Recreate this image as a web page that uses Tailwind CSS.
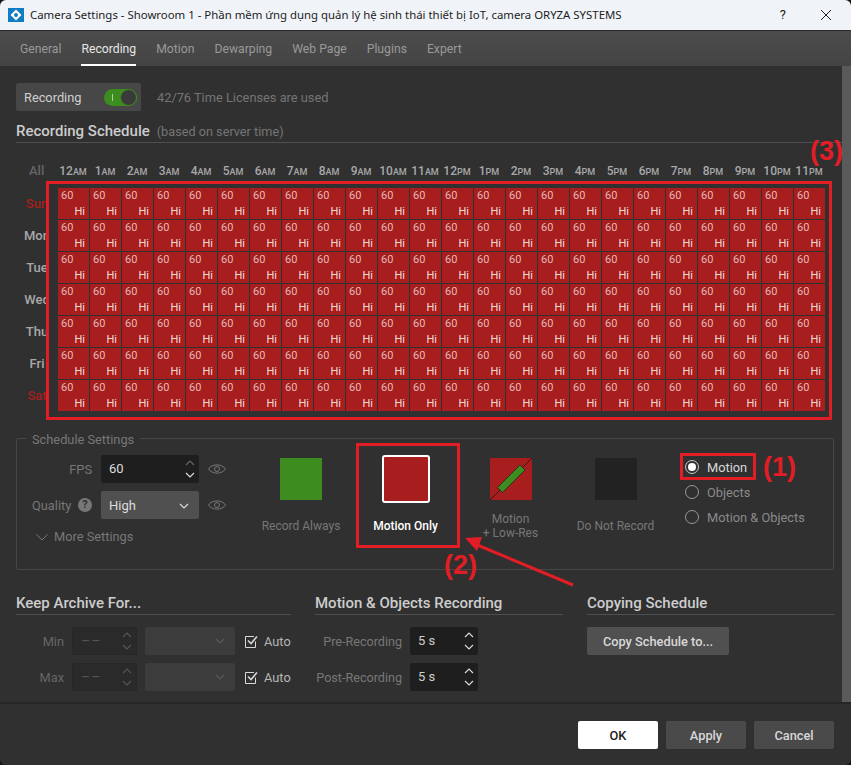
<!DOCTYPE html>
<html lang="en">
<head>
    <meta charset="UTF-8">
    <title>Camera Settings</title>
    <script src="https://cdn.jsdelivr.net/npm/@tailwindcss/browser@4"></script>
</head>
<body class="bg-[#141414]">
<div class="relative w-[851px] h-[765px] overflow-hidden rounded-[6px] bg-[#303030] font-['Roboto',sans-serif] text-[12px] text-[#8a8a8a]">

    <!-- Title bar -->
    <div class="h-[31px] flex items-center bg-[#f0f4f9] border-b border-[#2a2a2a] text-[#1c1c1c]">
        <svg class="ml-[8px] w-[16px] h-[14px]" viewBox="0 0 16 14">
            <rect width="16" height="14" fill="#0f7cc4"/>
            <path d="M8 1.5 L13.5 7 L8 12.5 L2.5 7 Z" fill="#fff"/>
            <circle cx="8" cy="7" r="2" fill="#0f7cc4"/>
        </svg>
        <span class="ml-[6px] font-['Noto_Sans',sans-serif] text-[11.4px]">Camera Settings - Showroom 1 - Phần mềm ứng dụng quản lý hệ sinh thái thiết bị IoT, camera ORYZA SYSTEMS</span>
        <span class="ml-auto mr-[35px] text-[13px]">?</span>
        <svg class="mr-[20px] w-[10px] h-[10px]" viewBox="0 0 10 10" fill="none" stroke="#222" stroke-width="1"><path d="M0 0 L10 10 M10 0 L0 10"/></svg>
    </div>

    <!-- Tabs -->
    <div class="h-[35px] flex gap-[20px] pl-[20px] bg-gradient-to-b from-[#4c4c4c] to-[#444444] text-[12.2px] text-[#999999]">
        <div class="flex items-center pt-[1px]">General</div>
        <div class="flex items-center text-[#e6e6e6] border-b-2 border-white pt-[3px]">Recording</div>
        <div class="flex items-center pt-[1px]">Motion</div>
        <div class="flex items-center pt-[1px]">Dewarping</div>
        <div class="flex items-center pt-[1px]">Web Page</div>
        <div class="flex items-center pt-[1px]">Plugins</div>
        <div class="flex items-center pt-[1px]">Expert</div>
    </div>

    <!-- Main -->
    <div class="h-[636px] flex">
        <div class="w-[842px] pl-[16px] pr-[8px] pt-[17px]">

            <div class="flex items-center h-[28px]">
                <div class="w-[125px] h-[28px] rounded-[2px] bg-[#474747] flex items-center pl-[8px] text-[#cfcfcf] text-[12.8px]">
                    <span class="pt-[2px]">Recording</span>
                    <div class="ml-auto mr-[4px] relative w-[33px] h-[17px] rounded-full bg-[#3d8c1f]">
                        <div class="absolute left-[8px] top-[5px] w-[1px] h-[7px] bg-[#a5d68f]"></div>
                        <div class="absolute right-0 top-0 w-[17px] h-[17px] rounded-full bg-[#3a3a3a] border border-[#3d8c1f]"></div>
                    </div>
                </div>
                <span class="ml-[16px] pt-[2px] text-[12.8px] text-[#757575]">42/76 Time Licenses are used</span>
            </div>

            <div class="h-[32px] -mr-[8px] flex items-end pb-[2px] border-b border-[#4f4f4f]">
                <span class="text-[15px] leading-[17px] font-medium text-[#cccccc]">Recording Schedule</span>
                <span class="ml-[7px] text-[12.7px] leading-[17px] text-[#757575]">(based on server time)</span>
            </div>

            <!-- Schedule grid -->
            <div class="mt-[18px] flex h-[20px] items-center">
                <div class="w-[42px] pl-[13px] text-[13px] font-medium text-[#666666]">All</div>
                <div id="hours" class="flex -ml-px"></div>
            </div>
            <div class="mt-[7px] flex h-[224px]">
                <div id="days" class="w-[30px] mr-[12px] overflow-hidden"></div>
                <div id="cells" class="grid grid-cols-[repeat(24,32px)] grid-rows-[repeat(7,32px)]"></div>
            </div>

            <!-- Schedule settings -->
            <div class="relative mt-[26px] h-[132px] border border-[#474747] rounded-[2px] flex pt-[16px]">
                <span class="absolute left-[9px] -top-[6px] px-[6px] bg-[#303030] text-[12.8px] leading-[14px] text-[#777777]">Schedule Settings</span>

                <div class="w-[231px] pl-[15px] flex flex-col gap-[8px]">
                    <div class="flex items-center h-[28px]">
                        <span class="w-[60px] pt-[2px] text-right text-[12.8px] text-[#777777]">FPS</span>
                        <div class="ml-[9px] w-[98px] h-[28px] rounded-[2px] bg-[#1e1e1e] flex items-center pl-[8px] text-[13px] text-[#dddddd]">
                            60
                            <svg class="ml-auto mr-[4px] w-[10px] h-[18px]" viewBox="0 0 10 18" fill="none" stroke-width="1.2"><path d="M1 5 L5 1 L9 5" stroke="#666"/><path d="M1 13 L5 17 L9 13" stroke="#ddd"/></svg>
                        </div>
                        <svg class="ml-[9px] w-[18px] h-[12px]" viewBox="0 0 18 12" fill="none" stroke="#777" stroke-width="1"><path d="M0.5 6 C4 0.5 14 0.5 17.5 6 C14 11.5 4 11.5 0.5 6 Z"/><circle cx="9" cy="6" r="2.5"/></svg>
                    </div>
                    <div class="flex items-center h-[28px]">
                        <div class="w-[60px] flex items-center text-[12.8px] text-[#777777]">
                            <span class="pt-[2px]">Quality</span>
                            <span class="ml-auto w-[14px] h-[14px] rounded-full bg-[#777777] text-[#303030] text-[11px] font-bold leading-[14px] text-center">?</span>
                        </div>
                        <div class="ml-[9px] w-[98px] h-[28px] rounded-[2px] bg-[#505050] flex items-center pl-[8px] pt-[1px] text-[13px] text-[#dddddd]">
                            High
                            <svg class="ml-auto mr-[10px] w-[10px] h-[6px]" viewBox="0 0 10 6" fill="none" stroke="#ddd" stroke-width="1.2"><path d="M1 1 L5 5 L9 1"/></svg>
                        </div>
                        <svg class="ml-[9px] w-[18px] h-[12px]" viewBox="0 0 18 12" fill="none" stroke="#777" stroke-width="1"><path d="M0.5 6 C4 0.5 14 0.5 17.5 6 C14 11.5 4 11.5 0.5 6 Z"/><circle cx="9" cy="6" r="2.5"/></svg>
                    </div>
                    <div class="flex items-center h-[14px] mt-[3px] pl-[4px] text-[12.8px] text-[#777777]">
                        <svg class="w-[12px] h-[7px] mr-[6px]" viewBox="0 0 12 7" fill="none" stroke="#777" stroke-width="1"><path d="M0.5 0.5 L6 6 L11.5 0.5"/></svg>
                        More Settings
                    </div>
                </div>

                <div class="w-[105px] flex flex-col items-center">
                    <div class="h-[48px] flex items-center"><div class="w-[42px] h-[42px] bg-[#3d8c1f]"></div></div>
                    <div class="mt-[9px] pl-[1px] h-[28px] flex items-center text-center leading-[14px] text-[#777777]">Record Always</div>
                </div>
                <div class="w-[105px] flex flex-col items-center">
                    <div class="w-[48px] h-[48px] bg-[#a81e1e] border-2 border-white rounded-[3px]"></div>
                    <div class="mt-[9px] h-[28px] flex items-center text-center leading-[14px] font-medium text-white">Motion Only</div>
                </div>
                <div class="w-[105px] flex flex-col items-center">
                    <div class="h-[48px] flex items-center">
                        <svg class="w-[42px] h-[42px]" viewBox="0 0 42 42">
                            <rect width="42" height="42" fill="#a81e1e"/>
                            <path d="M0 42 L42 0" stroke="#3a1414" stroke-width="1"/>
                            <path d="M30 7 L35 12 L12.5 34.5 L7.5 29.5 Z" fill="#3d8c1f" stroke="#1d2a14" stroke-width="0.8"/>
                        </svg>
                    </div>
                    <div class="mt-[9px] h-[28px] flex items-center text-center leading-[14px] text-[#777777]">Motion<br>+ Low-Res</div>
                </div>
                <div class="w-[105px] flex flex-col items-center">
                    <div class="h-[48px] flex items-center"><div class="w-[42px] h-[42px] bg-[#222222]"></div></div>
                    <div class="mt-[9px] h-[28px] flex items-center text-center leading-[14px] text-[#777777]">Do Not Record</div>
                </div>

                <div class="ml-[17px] -mt-px text-[12.8px] text-[#8a8a8a]">
                    <div class="h-[25px] flex items-center text-[#d8d8d8]">
                        <span class="w-[14px] h-[14px] rounded-full border border-[#cccccc] flex items-center justify-center mr-[8px]"><span class="w-[8px] h-[8px] rounded-full bg-white"></span></span>
                        <span class="pt-[2px]">Motion</span>
                    </div>
                    <div class="h-[25px] flex items-center">
                        <span class="w-[14px] h-[14px] rounded-full border border-[#999999] mr-[8px]"></span>
                        <span class="pt-[2px]">Objects</span>
                    </div>
                    <div class="h-[25px] flex items-center">
                        <span class="w-[14px] h-[14px] rounded-full border border-[#999999] mr-[8px]"></span>
                        <span class="pt-[2px]">Motion &amp; Objects</span>
                    </div>
                </div>
            </div>

            <!-- Bottom columns -->
            <div class="mt-[20px] flex gap-[24px]">
                <div class="w-[275px]">
                    <div class="h-[25px] border-b border-[#4f4f4f] text-[15px] font-medium leading-[27px] text-[#cccccc]">Keep Archive For...</div>
                    <div class="mt-[12px] flex flex-col gap-[8px] text-[12.8px] text-[#666666]">
                        <div class="flex items-center h-[28px]">
                            <span class="w-[48px] pt-[2px] text-right">Min</span>
                            <div class="ml-[8px] w-[65px] h-[28px] rounded-[2px] bg-[#2a2a2a] border border-[#272727] flex items-center pl-[8px] text-[14px] tracking-[1px] text-[#555555]">
                                ––
                                <svg class="ml-auto mr-[4px] w-[10px] h-[18px]" viewBox="0 0 10 18" fill="none" stroke="#555" stroke-width="1.1"><path d="M1 5 L5 1 L9 5"/><path d="M1 13 L5 17 L9 13"/></svg>
                            </div>
                            <div class="ml-[8px] w-[90px] h-[28px] rounded-[2px] bg-[#3c3c3c] flex items-center justify-end pr-[10px]">
                                <svg class="w-[10px] h-[6px]" viewBox="0 0 10 6" fill="none" stroke="#5a5a5a" stroke-width="1.2"><path d="M1 1 L5 5 L9 1"/></svg>
                            </div>
                            <svg class="ml-[10px] w-[13px] h-[13px]" viewBox="0 0 13 13" fill="none" stroke="#d8d8d8"><path d="M10.5 6.5 V12.5 H0.5 V1.5 H9" stroke-width="1"/><path d="M3 5.5 L6 8.5 L12 1.5" stroke-width="1.6"/></svg>
                            <span class="ml-[6px] pt-[1px] text-[#b5b5b5]">Auto</span>
                        </div>
                        <div class="flex items-center h-[28px]">
                            <span class="w-[48px] pt-[2px] text-right">Max</span>
                            <div class="ml-[8px] w-[65px] h-[28px] rounded-[2px] bg-[#2a2a2a] border border-[#272727] flex items-center pl-[8px] text-[14px] tracking-[1px] text-[#555555]">
                                ––
                                <svg class="ml-auto mr-[4px] w-[10px] h-[18px]" viewBox="0 0 10 18" fill="none" stroke="#555" stroke-width="1.1"><path d="M1 5 L5 1 L9 5"/><path d="M1 13 L5 17 L9 13"/></svg>
                            </div>
                            <div class="ml-[8px] w-[90px] h-[28px] rounded-[2px] bg-[#3c3c3c] flex items-center justify-end pr-[10px]">
                                <svg class="w-[10px] h-[6px]" viewBox="0 0 10 6" fill="none" stroke="#5a5a5a" stroke-width="1.2"><path d="M1 1 L5 5 L9 1"/></svg>
                            </div>
                            <svg class="ml-[10px] w-[13px] h-[13px]" viewBox="0 0 13 13" fill="none" stroke="#d8d8d8"><path d="M10.5 6.5 V12.5 H0.5 V1.5 H9" stroke-width="1"/><path d="M3 5.5 L6 8.5 L12 1.5" stroke-width="1.6"/></svg>
                            <span class="ml-[6px] pt-[1px] text-[#b5b5b5]">Auto</span>
                        </div>
                    </div>
                </div>

                <div class="w-[248px]">
                    <div class="h-[25px] border-b border-[#4f4f4f] text-[15px] font-medium leading-[27px] text-[#cccccc]">Motion &amp; Objects Recording</div>
                    <div class="mt-[12px] flex flex-col gap-[8px] text-[12.6px] text-[#777777]">
                        <div class="flex items-center h-[28px]">
                            <span class="w-[87px] pt-[2px] text-right whitespace-nowrap">Pre-Recording</span>
                            <div class="ml-[8px] w-[68px] h-[28px] rounded-[2px] bg-[#1e1e1e] flex items-center pl-[8px] text-[13px] text-[#cccccc]">
                                5 s
                                <svg class="ml-auto mr-[4px] w-[10px] h-[18px]" viewBox="0 0 10 18" fill="none" stroke="#ddd" stroke-width="1.1"><path d="M1 5 L5 1 L9 5"/><path d="M1 13 L5 17 L9 13"/></svg>
                            </div>
                        </div>
                        <div class="flex items-center h-[28px]">
                            <span class="w-[87px] pt-[2px] text-right whitespace-nowrap">Post-Recording</span>
                            <div class="ml-[8px] w-[68px] h-[28px] rounded-[2px] bg-[#1e1e1e] flex items-center pl-[8px] text-[13px] text-[#cccccc]">
                                5 s
                                <svg class="ml-auto mr-[4px] w-[10px] h-[18px]" viewBox="0 0 10 18" fill="none" stroke="#ddd" stroke-width="1.1"><path d="M1 5 L5 1 L9 5"/><path d="M1 13 L5 17 L9 13"/></svg>
                            </div>
                        </div>
                    </div>
                </div>

                <div class="w-[247px]">
                    <div class="h-[25px] border-b border-[#4f4f4f] text-[15px] font-medium leading-[27px] text-[#cccccc]">Copying Schedule</div>
                    <button class="mt-[12px] w-[142px] h-[28px] pt-[1px] rounded-[2px] bg-[#505050] text-[12.8px] font-medium text-[#d8d8d8]">Copy Schedule to...</button>
                </div>
            </div>
        </div>
        <div class="w-[9px] bg-[#5a5a5a]"></div>
    </div>

    <!-- Footer -->
    <div class="h-[63px] border-t-2 border-[#262626] flex justify-end gap-[8px] pt-[17px] pr-[17px] text-[12.8px] font-medium">
        <button class="w-[80px] h-[28px] pt-[1px] rounded-[2px] bg-white text-[#222222]">OK</button>
        <button class="w-[80px] h-[28px] pt-[1px] rounded-[2px] bg-[#4a4a4a] text-[#d8d8d8]">Apply</button>
        <button class="w-[80px] h-[28px] pt-[1px] rounded-[2px] bg-[#4a4a4a] text-[#d8d8d8]">Cancel</button>
    </div>

    <!-- Annotations drawn over the screenshot -->
    <div class="absolute left-[46px] top-[181px] w-[786px] h-[239px] border-[3px] border-[#e21d25]"></div>
    <div class="absolute left-[356px] top-[443px] w-[104px] h-[105px] border-[3px] border-[#e21d25]"></div>
    <div class="absolute left-[680px] top-[453px] w-[76px] h-[27px] border-[3px] border-[#e21d25]"></div>
    <span class="absolute left-[763px] top-[452px] font-['Liberation_Sans',sans-serif] font-bold text-[27px] leading-[30px] text-[#e21d25]">(1)</span>
    <span class="absolute left-[444px] top-[550px] font-['Liberation_Sans',sans-serif] font-bold text-[27px] leading-[30px] text-[#e21d25]">(2)</span>
    <span class="absolute left-[810px] top-[136px] font-['Liberation_Sans',sans-serif] font-bold text-[27px] leading-[30px] text-[#e21d25]">(3)</span>
    <svg class="absolute left-[460px] top-[530px] w-[120px] h-[60px]" viewBox="0 0 120 60">
        <path d="M113 55 L15 14" stroke="#e21d25" stroke-width="3"/>
        <path d="M5 8 L22 7 L17 21 Z" fill="#e21d25"/>
    </svg>
</div>

<script>
    const hours = ["12","1","2","3","4","5","6","7","8","9","10","11"];
    let h = "";
    ["AM","PM"].forEach(function(s) {
        hours.forEach(function(n) {
            h += '<div class="w-[32px] text-center font-medium text-[12px] text-[#a8a8a8]">' + n + '<span class="text-[9px]">' + s + '</span></div>';
        });
    });
    document.getElementById("hours").innerHTML = h;

    let d = "";
    ["Sun","Mon","Tue","Wed","Thu","Fri","Sat"].forEach(function(n) {
        const cor = (n === "Sun" || n === "Sat") ? "text-[#a81e1e]" : "text-[#a8a8a8]";
        d += '<div class="w-[42px] h-[32px] flex items-center justify-center font-medium text-[13px] ' + cor + '">' + n + '</div>';
    });
    document.getElementById("days").innerHTML = d;

    let c = "";
    for (let i = 0; i < 168; i++) {
        c += '<div class="w-[31px] h-[31px] bg-[#a81e1e] flex flex-col justify-between px-[3px] pt-[1px] pb-[0px] text-[11px] leading-[14px]"><span class="text-[#e3b9b9]">60</span><span class="self-end pr-[1px] text-[#f2dcdc]">Hi</span></div>';
    }
    document.getElementById("cells").innerHTML = c;
</script>
</body>
</html>
